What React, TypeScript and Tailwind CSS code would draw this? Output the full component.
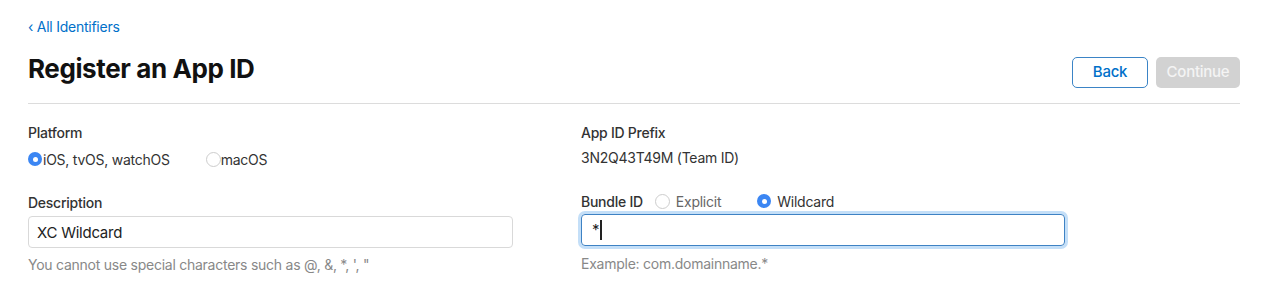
import { useState } from 'react';

function Radio({ checked }: { checked: boolean }) {
  return checked ? (
    <span className="flex h-[14px] w-[14px] shrink-0 items-center justify-center rounded-full bg-[#3b86f3]">
      <span className="h-[5px] w-[5px] rounded-full bg-white" />
    </span>
  ) : (
    <span className="h-[15px] w-[15px] shrink-0 rounded-full border border-[#cdcdcd] bg-white" />
  );
}

export default function App() {
  const [platform, setPlatform] = useState('ios');
  const [bundleType, setBundleType] = useState('wildcard');
  const [description, setDescription] = useState('XC Wildcard');
  const [bundleId, setBundleId] = useState('*');

  return (
    <div className="min-h-[303px] bg-white pl-[28px] pr-[40px] pt-[17px] tracking-[-0.25px] text-[#333] [font-family:Inter,'Noto_Sans',sans-serif]">
      <a href="#" className="block text-[14px] leading-[20px] text-[#0070c9]">
        ‹ All Identifiers
      </a>

      <div className="mt-[16px] flex items-start justify-between">
        <h1 className="text-[26px] font-bold leading-[32px] tracking-[-0.4px] text-[#111]">Register an App ID</h1>
        <div className="mt-[4px] flex gap-[8px]">
          <button className="h-[31px] w-[76px] rounded-[5px] border border-[#3b84c6] bg-white text-[15px] font-medium text-[#0070c9]">
            Back
          </button>
          <button className="h-[31px] w-[84px] rounded-[5px] bg-[#d2d2d2] text-[15px] font-medium text-[#f4f4f4]">
            Continue
          </button>
        </div>
      </div>

      <div className="mt-[15px] h-px bg-[#dcdcdc]" />

      <div className="grid grid-cols-[553px_484px] pt-[19px]">
        <div>
          <div className="text-[14px] font-medium leading-[20px]">Platform</div>
          <div className="mt-[6px] flex h-[20px] items-center text-[14px]">
            <label className="flex cursor-pointer items-center" onClick={() => setPlatform('ios')}>
              <Radio checked={platform === 'ios'} />
              <span className="ml-[1px]">iOS, tvOS, watchOS</span>
            </label>
            <label className="ml-[36px] flex cursor-pointer items-center" onClick={() => setPlatform('macos')}>
              <Radio checked={platform === 'macos'} />
              <span>macOS</span>
            </label>
          </div>

          <div className="mt-[24px] text-[14px] font-medium leading-[20px]">Description</div>
          <input
            value={description}
            onChange={(e) => setDescription(e.target.value)}
            className="mt-[3px] block h-[32px] w-[485px] rounded-[4px] border border-[#d9d9d9] px-[8px] text-[15px] text-[#222] outline-none"
          />
          <div className="mt-[7px] text-[14px] leading-[20px] text-[#888]">
            You cannot use special characters such as @, &amp;, *, ', "
          </div>
        </div>

        <div>
          <div className="text-[14px] font-medium leading-[20px]">App ID Prefix</div>
          <div className="mt-[5px] text-[14px] leading-[20px]">3N2Q43T49M (Team ID)</div>

          <div className="mt-[23px] flex h-[20px] items-center text-[14px]">
            <span className="font-medium">Bundle ID</span>
            <label className="ml-[12px] flex cursor-pointer items-center text-[#666]" onClick={() => setBundleType('explicit')}>
              <Radio checked={bundleType === 'explicit'} />
              <span className="ml-[6px]">Explicit</span>
            </label>
            <label className="ml-[36px] flex cursor-pointer items-center" onClick={() => setBundleType('wildcard')}>
              <Radio checked={bundleType === 'wildcard'} />
              <span className="ml-[6px]">Wildcard</span>
            </label>
          </div>
          {/* focused field, drawn with a visible caret */}
          <div className="mt-[3px] flex h-[32px] w-[484px] items-center rounded-[4px] border border-[#3e82c4] px-[10px] text-[15px] text-[#222] shadow-[0_0_0_3px_#c4dff8]">
            <input
              value={bundleId}
              onChange={(e) => setBundleId(e.target.value)}
              size={1}
              className="w-[8px] bg-transparent outline-none"
            />
            <span className="h-[20px] w-[2px] bg-[#222]" />
          </div>
          <div className="mt-[8px] text-[14px] leading-[20px] text-[#888]">Example: com.domainname.*</div>
        </div>
      </div>
    </div>
  );
}
